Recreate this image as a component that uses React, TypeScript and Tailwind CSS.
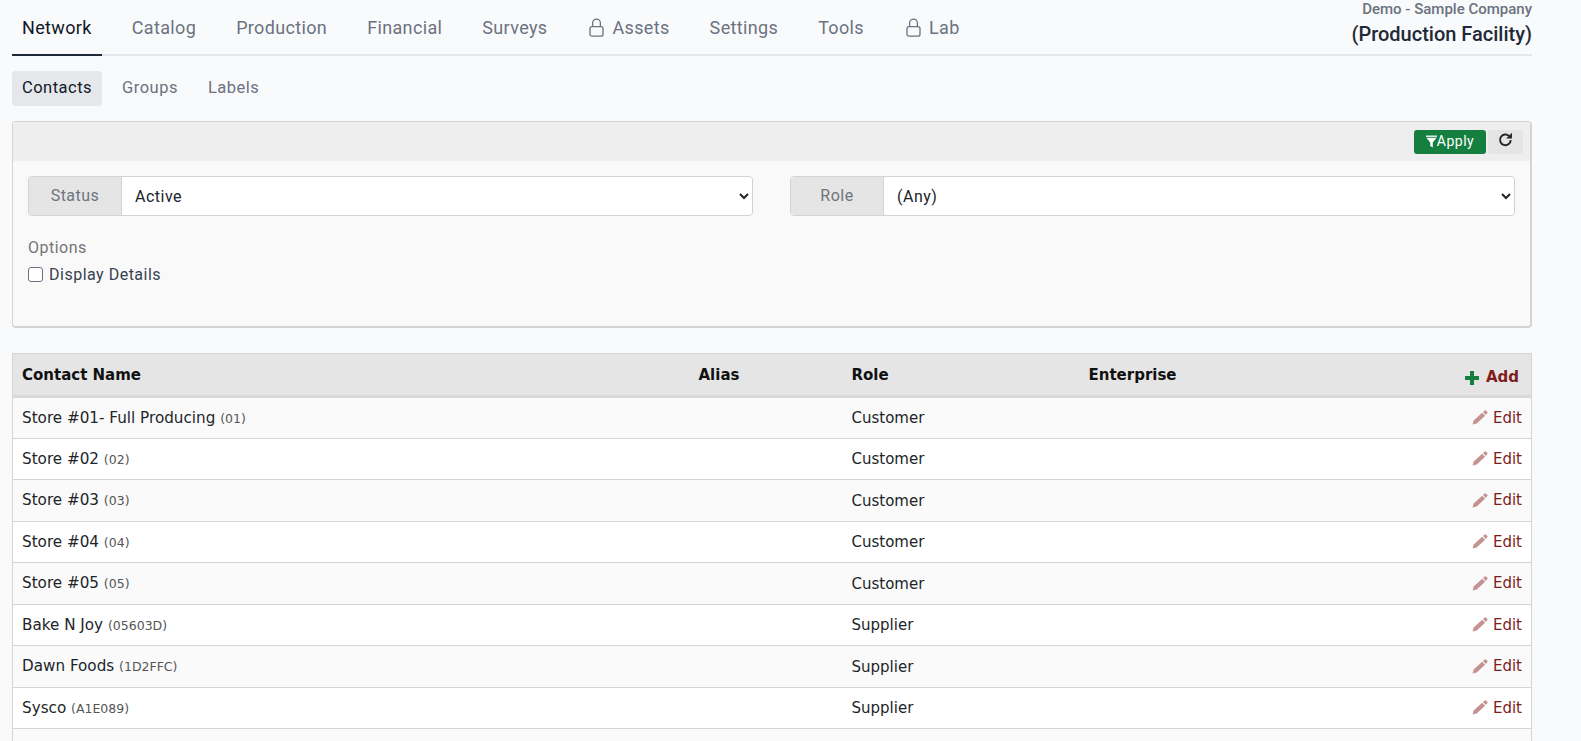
const mainTabs = [
  { label: 'Network', active: true },
  { label: 'Catalog' },
  { label: 'Production' },
  { label: 'Financial' },
  { label: 'Surveys' },
  { label: 'Assets', locked: true },
  { label: 'Settings' },
  { label: 'Tools' },
  { label: 'Lab', locked: true },
];

const contacts = [
  { name: 'Store #01- Full Producing', code: '01', role: 'Customer' },
  { name: 'Store #02', code: '02', role: 'Customer' },
  { name: 'Store #03', code: '03', role: 'Customer' },
  { name: 'Store #04', code: '04', role: 'Customer' },
  { name: 'Store #05', code: '05', role: 'Customer' },
  { name: 'Bake N Joy', code: '05603D', role: 'Supplier' },
  { name: 'Dawn Foods', code: '1D2FFC', role: 'Supplier' },
  { name: 'Sysco', code: 'A1E089', role: 'Supplier' },
];

function LockIcon() {
  return (
    <svg width="15" height="19" viewBox="0 0 15 19" fill="none" stroke="currentColor" strokeWidth="1.3" className="ml-[2px]">
      <rect x="1" y="8.6" width="13" height="9.6" rx="2" />
      <path d="M3.6 8.6V5a3.9 3.9 0 0 1 7.8 0v3.6" />
    </svg>
  );
}

function FunnelIcon() {
  return (
    <svg width="11" height="13" viewBox="0 0 12 13" fill="currentColor">
      <rect x="0" y="0" width="12" height="1.4" />
      <path d="M0.4 2.4h11.2L7.4 7.6V13L4.6 11.4V7.6z" />
    </svg>
  );
}

function RefreshIcon() {
  return (
    <svg width="15" height="15" viewBox="0 0 14 14" fill="none" className="-mt-1 text-[#212529]">
      <path d="M11.9 7.6a5 5 0 1 1-1.6-4" stroke="currentColor" strokeWidth="1.8" />
      <path d="M13 0.6V6H7.6z" fill="currentColor" />
    </svg>
  );
}

function PlusIcon() {
  return (
    <svg width="14" height="14" viewBox="0 0 14 14" fill="currentColor" className="text-[#157f3f]">
      <path d="M5 0h4v5h5v4H9v5H5V9H0V5h5z" />
    </svg>
  );
}

function PencilIcon() {
  return (
    <svg width="16" height="15" viewBox="0 0 16 15" fill="currentColor" className="text-[#c49292]">
      <path d="M0.5 14.6l1.2-4.2 8.4-7.6 3 3-8.4 7.6z" />
      <path d="M11 2l1.7-1.6a0.8 0.8 0 0 1 1.1 0l1.6 1.6a0.8 0.8 0 0 1 0 1.1L13.8 5z" />
    </svg>
  );
}

function FilterSelect({ label, value }: { label: string; value: string }) {
  return (
    <div className="flex h-10 flex-1 rounded border border-[#ced4da]">
      <span className="flex w-[93px] items-center justify-center rounded-l border-r border-[#ced4da] bg-[#e5e5e5] text-[16px] text-[#6c757d]">
        {label}
      </span>
      <select className="min-w-0 flex-1 rounded-r bg-white pl-[9px] text-[16px] text-[#212529]">
        <option>{value}</option>
      </select>
    </div>
  );
}

export default function App() {
  return (
    <div className="h-screen overflow-hidden bg-gray-50 font-['Roboto',sans-serif] tracking-[0.5px]">
      <div className="ml-3 w-[1520px]">
        <header className="flex h-14 items-end justify-between border-b-2 border-[#e5e7eb]">
          <nav className="flex tracking-[0.35px]">
            {mainTabs.map((tab) => (
              <a
                key={tab.label}
                className={`-mb-0.5 mr-[20px] flex h-14 items-center gap-2 border-b-2 px-2.5 text-[18px] ${
                  tab.active ? 'border-[#1f2937] text-[#111827]' : 'border-transparent text-[#6b7280]'
                }`}
              >
                {tab.locked && <LockIcon />}
                {tab.label}
              </a>
            ))}
          </nav>
          <div className="self-start text-right tracking-normal">
            <div className="text-[15px] leading-[18px] font-medium text-[#6b7280]">Demo - Sample Company</div>
            <div className="mt-[4px] text-[20px] leading-6 font-medium text-[#1f2937]">(Production Facility)</div>
          </div>
        </header>

        <div className="mt-[15px] flex gap-2.5 text-[16.5px]">
          <a className="flex h-[35px] w-[90px] items-center justify-center rounded bg-[#e5e7eb] text-[#111827]">Contacts</a>
          <a className="flex h-[35px] items-center px-2.5 text-[#6b7280]">Groups</a>
          <a className="flex h-[35px] items-center px-2.5 text-[#6b7280]">Labels</a>
        </div>

        <section className="mt-[15px] h-[207px] rounded border border-r-2 border-b-2 border-[#d4d4d4] bg-[#f9f9f9]">
          <div className="flex h-[39px] items-center justify-end gap-[2px] bg-[#eeeeee] pr-[7px]">
            <button className="flex h-6 w-[72px] items-center justify-center rounded-[3px] bg-[#157f3f] text-[14px] text-white">
              <FunnelIcon />
              Apply
            </button>
            <button className="flex h-6 w-[35px] items-center justify-center rounded-[3px] bg-[#e5e5e5]">
              <RefreshIcon />
            </button>
          </div>
          <div className="px-[15px] pt-[15px]">
            <div className="flex gap-[37px]">
              <FilterSelect label="Status" value="Active" />
              <FilterSelect label="Role" value="(Any)" />
            </div>
            <div className="mt-[22px] text-[16px] leading-5 text-[#757575]">Options</div>
            <label className="mt-[7px] flex items-center gap-1.5 text-[16px] leading-5 text-[#374151]">
              <input type="checkbox" className="mb-[2px] size-[15px] appearance-none rounded-[3px] border border-[#6b7280] bg-white" />
              Display Details
            </label>
          </div>
        </section>

        <table className="mt-[25px] w-full table-fixed border-collapse border border-[#d4d4d4] font-['DejaVu_Sans',sans-serif] text-[15px] tracking-normal text-[#212529]">
          <colgroup>
            <col className="w-[676px]" />
            <col className="w-[153px]" />
            <col className="w-[237px]" />
            <col />
            <col className="w-[120px]" />
          </colgroup>
          <thead>
            <tr className="h-[43px] border-b-[3px] border-[#d9d9d9] bg-[#e5e5e5] text-left font-bold text-[#111111]">
              <th className="px-[9px] pt-px">Contact Name</th>
              <th className="px-[10px] pt-px">Alias</th>
              <th className="px-[10px] pt-px">Role</th>
              <th className="px-[10px] pt-px">Enterprise</th>
              <th className="px-[12px] text-[#7f1d1d]">
                <div className="flex items-center justify-end gap-[7px] pt-[6px]">
                  <PlusIcon />
                  Add
                </div>
              </th>
            </tr>
          </thead>
          <tbody>
            {contacts.map((c, i) => (
              <tr key={c.name} className={`h-[41.5px] border-b border-[#d4d4d4] ${i % 2 === 0 ? 'bg-[#fafafa]' : 'bg-white'}`}>
                <td className="px-[9px] pt-px text-[15.2px] leading-[22.5px]">
                  {c.name} <span className="text-[12.5px] text-[#555555]">({c.code})</span>
                </td>
                <td />
                <td className="px-[10px] pt-px">{c.role}</td>
                <td />
                <td className="px-[9px] pt-[3px] text-right text-[#7f1d1d]">
                  <span className="inline-flex items-center gap-[5px]">
                    <PencilIcon />
                    Edit
                  </span>
                </td>
              </tr>
            ))}
            <tr className="h-[41.5px] bg-[#fafafa]">
              <td colSpan={5} />
            </tr>
          </tbody>
        </table>
      </div>
    </div>
  );
}
